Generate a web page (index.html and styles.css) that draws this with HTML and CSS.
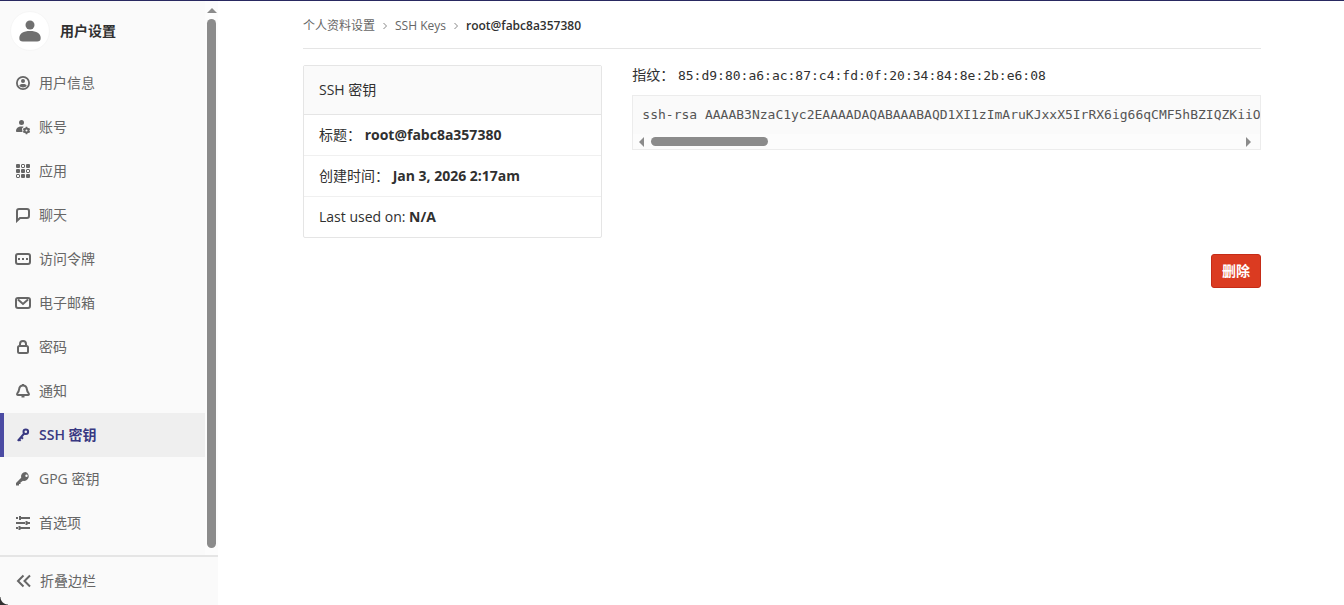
FILE: index.html
```html
<!DOCTYPE html>
<html lang="zh-CN">
<head>
    <meta charset="UTF-8">
    <meta name="viewport" content="width=device-width, initial-scale=1.0">
    <title>root@fabc8a357380 · SSH Keys</title>
    <link rel="stylesheet" href="styles.css">
</head>
<body>
<div class="layout-page">
    <aside class="sidebar">
        <div class="sidebar-scroll">
            <nav class="sidebar-nav">
                <a class="context-header" href="#">
                    <span class="avatar">
                        <svg width="24" height="24" viewBox="0 0 24 24"><circle cx="12" cy="6" r="4.500"/><path d="M1.300 19c0-4.600 4.200-7 10.700-7s10.700 2.400 10.700 7c0 2.800-1.300 3.500-3.500 3.500H4.800C2.600 22.500 1.300 21.800 1.300 19z"/></svg>
                    </span>
                    用户设置
                </a>
                <ul class="nav-list">
                    <li><a href="#">
                        <svg class="icon" viewBox="0 0 16 16"><circle cx="8" cy="8" r="6.100" fill="none" stroke="currentColor" stroke-width="1.800"/><circle cx="8" cy="6" r="2"/><path d="M4.300 10.800C4.300 9.400 6 8.900 8 8.900s3.700.5 3.700 1.900C10.900 12 9.600 12.500 8 12.500s-2.900-.5-3.700-1.700z"/></svg>
                        用户信息</a></li>
                    <li><a href="#">
                        <svg class="icon" viewBox="0 0 16 16"><circle cx="6.500" cy="3.500" r="2.500"/><path d="M1 12.500C1 9 3 7.500 6.500 7.500c.9 0 1.600.1 2.200.3L7 9.500 7.500 13H2c-.7 0-1-.2-1-.5z"/><circle cx="11.500" cy="11.500" r="2" fill="none" stroke="currentColor" stroke-width="2"/><path d="M11.500 7.800v1.600M11.500 13.600v1.600M8.300 9.700l1.400.8M13.300 12.500l1.400.8M8.300 13.300l1.400-.8M13.300 10.500l1.400-.8" stroke="currentColor" stroke-width="1.600"/></svg>
                        账号</a></li>
                    <li><a href="#">
                        <svg class="icon" viewBox="0 0 16 16"><rect x="1" y="1" width="4" height="4" rx="1"/><rect x="6.500" y="1.500" width="3" height="3" rx=".5" fill="none" stroke="currentColor"/><rect x="11" y="1" width="4" height="4" rx="1"/><rect x="1" y="6" width="4" height="4" rx="1"/><rect x="6" y="6" width="4" height="4" rx="1"/><rect x="11.500" y="6.500" width="3" height="3" rx=".5" fill="none" stroke="currentColor"/><rect x="1.500" y="11.500" width="3" height="3" rx=".5" fill="none" stroke="currentColor"/><rect x="6" y="11" width="4" height="4" rx="1"/><rect x="11" y="11" width="4" height="4" rx="1"/></svg>
                        应用</a></li>
                    <li><a href="#">
                        <svg class="icon line" viewBox="0 0 16 16"><path d="M2 13.800V4a2 2 0 0 1 2-2h8a2 2 0 0 1 2 2v5a2 2 0 0 1-2 2H5z"/></svg>
                        聊天</a></li>
                    <li><a href="#">
                        <svg class="icon line" viewBox="0 0 16 16"><rect x="1" y="3" width="14" height="10" rx="2"/><path d="M3 8h2M7 8h2M11 8h2"/></svg>
                        访问令牌</a></li>
                    <li><a href="#">
                        <svg class="icon line" viewBox="0 0 16 16"><rect x="1" y="3" width="14" height="10" rx="2"/><path d="M3 4.500l5 4.500 5-4.500"/></svg>
                        电子邮箱</a></li>
                    <li><a href="#">
                        <svg class="icon line" viewBox="0 0 16 16"><rect x="3" y="7" width="10" height="7" rx="1.500"/><path d="M5 7V5a3 3 0 0 1 6 0v2"/></svg>
                        密码</a></li>
                    <li><a href="#">
                        <svg class="icon line" viewBox="0 0 16 16"><path d="M8 2.500c-2.400 0-3.700 1.700-3.900 3.800-.2 2-.8 2.700-1.700 3.900-.7 1-.4 1.800.7 1.800h9.800c1.100 0 1.400-.8.700-1.800-.9-1.200-1.500-1.900-1.700-3.900C11.700 4.200 10.400 2.500 8 2.500z"/><path d="M8 1v1.500M6.500 13.500h3"/></svg>
                        通知</a></li>
                    <li class="active"><a href="#">
                        <svg class="icon line" viewBox="0 0 16 16"><circle cx="10.800" cy="4.700" r="2.300"/><path d="M9.200 6.500l-6.400 7.300M6 10l2 1.800M4 12.200l1.700 1.600"/></svg>
                        SSH 密钥</a></li>
                    <li><a href="#">
                        <svg class="icon" viewBox="0 0 16 16"><path fill-rule="evenodd" d="M10.500 1a4.500 4.500 0 0 0-4.300 5.800L1 12v2.500h3V13h1.500v-1.500l2.500-1.800A4.500 4.500 0 1 0 10.500 1zm1 2.500a1.200 1.200 0 1 1 0 2.400 1.200 1.200 0 0 1 0-2.400z"/></svg>
                        GPG 密钥</a></li>
                    <li><a href="#">
                        <svg class="icon line" viewBox="0 0 16 16"><path d="M1 3h2M5 3h10M1 8h9M12 8h3M1 13h2M5 13h10"/><path d="M5 1v4M11.500 6v4M4.500 11v4"/></svg>
                        首选项</a></li>
                </ul>
            </nav>
            <div class="scrollbar vertical">
                <span class="arrow up"></span>
                <span class="thumb"></span>
            </div>
        </div>
        <button class="toggle-sidebar" type="button">
            <svg class="icon line" viewBox="0 0 16 16"><path d="M7.500 2.500L2 8l5.500 5.500M14 2.500L8.500 8l5.500 5.500"/></svg>
            折叠边栏
        </button>
    </aside>

    <div class="content-wrapper">
        <div class="container">
            <nav class="breadcrumbs">
                <a href="#">个人资料设置</a>
                <svg class="chevron" viewBox="0 0 8 8"><path d="M2.500 1l3 3-3 3"/></svg>
                <a href="#">SSH Keys</a>
                <svg class="chevron" viewBox="0 0 8 8"><path d="M2.500 1l3 3-3 3"/></svg>
                <a class="current" href="#">root@fabc8a357380</a>
            </nav>

            <main class="row">
                <section class="card">
                    <div class="card-header">SSH 密钥</div>
                    <ul class="card-list">
                        <li>标题： <strong>root@fabc8a357380</strong></li>
                        <li>创建时间： <strong>Jan 3, 2026 2:17am</strong></li>
                        <li>Last used on: <strong>N/A</strong></li>
                    </ul>
                </section>
                <section class="key">
                    <p class="fingerprint">指纹： <code>85:d9:80:a6:ac:87:c4:fd:0f:20:34:84:8e:2b:e6:08</code></p>
                    <div class="well">
                        <pre>ssh-rsa AAAAB3NzaC1yc2EAAAADAQABAAABAQD1XI1zImAruKJxxX5IrRX6ig66qCMF5hBZIQZKiiO</pre>
                        <div class="scrollbar horizontal">
                            <span class="arrow left"></span>
                            <span class="thumb"></span>
                            <span class="arrow right"></span>
                        </div>
                    </div>
                </section>
            </main>
            <div class="actions">
                <button class="btn-danger" type="button">删除</button>
            </div>
        </div>
    </div>
</div>
</body>
</html>
```

FILE: styles.css
```css
* {
    box-sizing: border-box;
}

body {
    margin: 0;
    font-family: "Open Sans", "Noto Sans CJK SC", sans-serif;
    font-size: 14px;
    line-height: 20px;
    color: #303030;
    background: #fff;
    border-top: 1px solid #292961;
}

a {
    color: inherit;
    text-decoration: none;
}

ul {
    list-style: none;
    margin: 0;
    padding: 0;
}

.layout-page {
    display: flex;
    gap: 2px;
    min-height: calc(100vh - 1px);
}

/* Sidebar */
.sidebar {
    flex: 0 0 218px;
    display: flex;
    flex-direction: column;
    height: calc(100vh - 1px);
    position: sticky;
    top: 0;
    /* rounded window corner */
    background: radial-gradient(circle at 100% 0, transparent 7px, #303030 8px) left bottom / 8px 8px no-repeat #fafafa;
    color: #666;
}

.sidebar-scroll {
    flex: 1;
    min-height: 0;
    display: flex;
}

.sidebar-nav {
    flex: 1;
    overflow: hidden;
}

.context-header {
    display: flex;
    align-items: center;
    gap: 10px;
    height: 60px;
    padding-left: 10px;
    font-weight: 600;
    color: #303030;
}

.avatar {
    display: flex;
    align-items: center;
    justify-content: center;
    width: 40px;
    height: 40px;
    border: 1px solid #f6f6f6;
    border-radius: 50%;
    background: #fff;
}

.avatar svg {
    fill: #707070;
}

.nav-list a {
    display: flex;
    align-items: center;
    gap: 8px;
    height: 44px;
    padding-left: 15px;
}

.nav-list .active a {
    padding-left: 11px;
    border-left: 4px solid #4b4ba3;
    background: #efefef;
    color: #393982;
    font-weight: 600;
}

.icon {
    flex: none;
    width: 16px;
    height: 16px;
    fill: currentColor;
}

.line {
    fill: none;
    stroke: currentColor;
    stroke-width: 2;
}

.toggle-sidebar {
    display: flex;
    align-items: center;
    gap: 8px;
    height: 50px;
    padding: 0 16px;
    border: 0;
    border-top: 2px solid #e5e5e5;
    background: none;
    color: #666;
    font: inherit;
    cursor: pointer;
}

/* Scrollbars */
.scrollbar {
    display: flex;
    align-items: center;
    background: #fcfcfc;
}

.vertical {
    flex-direction: column;
    width: 13px;
    gap: 6px;
    padding: 7px 0;
}

.horizontal {
    height: 15px;
    gap: 7px;
    padding: 0 9px 0 6px;
}

.thumb {
    border-radius: 5px;
    background: #8b8b8b;
}

.vertical .thumb {
    flex: 1;
    width: 9px;
}

.horizontal .thumb {
    width: 19%;
    height: 9px;
}

.arrow {
    border: 0 solid transparent;
}

.up {
    border-width: 0 5px 5px;
    border-bottom-color: #8b8b8b;
}

.left {
    border-width: 5px 5px 5px 0;
    border-right-color: #8b8b8b;
}

.right {
    margin-left: auto;
    border-width: 5px 0 5px 5px;
    border-left-color: #8b8b8b;
}

/* Content */
.content-wrapper {
    flex: 1;
    min-width: 0;
}

.container {
    max-width: 990px;
    margin: 0 auto;
    padding: 0 16px;
}

.breadcrumbs {
    display: flex;
    align-items: center;
    gap: 6px;
    height: 48px;
    padding-top: 2px;
    border-bottom: 1px solid #e5e5e5;
    font-size: 12px;
    color: #666;
}

.breadcrumbs .current {
    font-weight: 600;
    color: #303030;
}

.chevron {
    width: 8px;
    height: 8px;
    fill: none;
    stroke: #888;
}

.row {
    display: grid;
    grid-template-columns: calc((100% + 30px) / 3 - 30px) 1fr;
    gap: 30px;
    margin-top: 16px;
}

.card {
    border: 1px solid #e5e5e5;
    border-radius: 2px;
}

.card-header {
    padding: 14px 15px;
    border-bottom: 1px solid #e5e5e5;
    background: #fafafa;
}

.card-list li {
    padding: 10px 15px;
    border-bottom: 1px solid #f0f0f0;
}

.card-list li:last-child {
    border-bottom: 0;
}

.key {
    min-width: 0;
}

.fingerprint {
    margin: 0 0 9px;
}

code,
pre {
    font-family: "DejaVu Sans Mono", "Liberation Mono", monospace;
    font-size: 13px;
}

.well {
    border: 1px solid #ececec;
    background: #fafafa;
}

.well pre {
    margin: 0;
    padding: 9px 0 9px 9px;
    overflow: hidden;
    color: #555;
}

.actions {
    display: flex;
    justify-content: flex-end;
    margin-top: 16px;
}

.btn-danger {
    height: 34px;
    padding: 0 10px;
    border: 1px solid #c52c17;
    border-radius: 3px;
    background: #db3b21;
    color: #fff;
    font: inherit;
    font-weight: 600;
    cursor: pointer;
}
```
